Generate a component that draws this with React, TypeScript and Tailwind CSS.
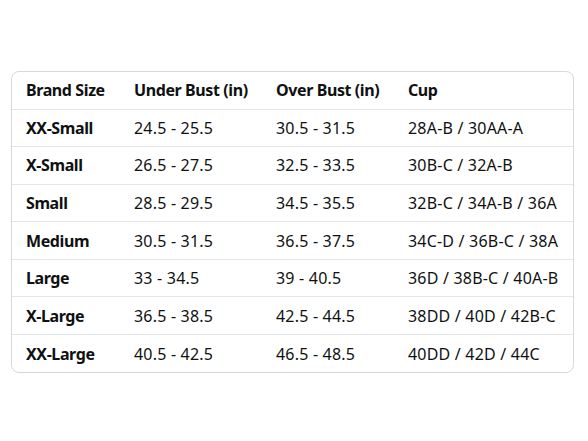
const rows = [
  ['XX-Small', '24.5 - 25.5', '30.5 - 31.5', '28A-B / 30AA-A'],
  ['X-Small', '26.5 - 27.5', '32.5 - 33.5', '30B-C / 32A-B'],
  ['Small', '28.5 - 29.5', '34.5 - 35.5', '32B-C / 34A-B / 36A'],
  ['Medium', '30.5 - 31.5', '36.5 - 37.5', '34C-D / 36B-C / 38A'],
  ['Large', '33 - 34.5', '39 - 40.5', '36D / 38B-C / 40A-B'],
  ['X-Large', '36.5 - 38.5', '42.5 - 44.5', '38DD / 40D / 42B-C'],
  ['XX-Large', '40.5 - 42.5', '46.5 - 48.5', '40DD / 42D / 44C'],
];

const App = () => {
  return (
    <div className="w-[588px] h-[441px] bg-white pt-[71px] pl-[11px] font-['Noto_Sans',sans-serif] text-[16px] text-[#0f1111]">
      <div className="w-[563px] rounded-[8px] border border-[#d5d9d9] overflow-hidden">
        <table className="w-full border-collapse table-fixed">
          <colgroup>
            <col className="w-[122px]" />
            <col className="w-[142px]" />
            <col className="w-[132px]" />
            <col />
          </colgroup>
          <thead>
            <tr className="h-[37px] border-b border-[#e3e6e6]">
              <th className="pl-[14px] text-left font-bold tracking-[-0.4px]">Brand Size</th>
              <th className="text-left font-bold tracking-[-0.4px]">Under Bust (in)</th>
              <th className="text-left font-bold tracking-[-0.4px]">Over Bust (in)</th>
              <th className="text-left font-bold tracking-[-0.4px]">Cup</th>
            </tr>
          </thead>
          <tbody>
            {rows.map((r, i) => (
              <tr key={r[0]} className={`h-[37.6px] ${i < rows.length - 1 ? 'border-b border-[#e3e6e6]' : ''}`}>
                <td className="pl-[14px] font-bold tracking-[-0.4px]">{r[0]}</td>
                <td className="tracking-[0.2px]">{r[1]}</td>
                <td className="tracking-[0.2px]">{r[2]}</td>
                <td className="tracking-[0.2px]">{r[3]}</td>
              </tr>
            ))}
          </tbody>
        </table>
      </div>
    </div>
  );
};

export default App;
